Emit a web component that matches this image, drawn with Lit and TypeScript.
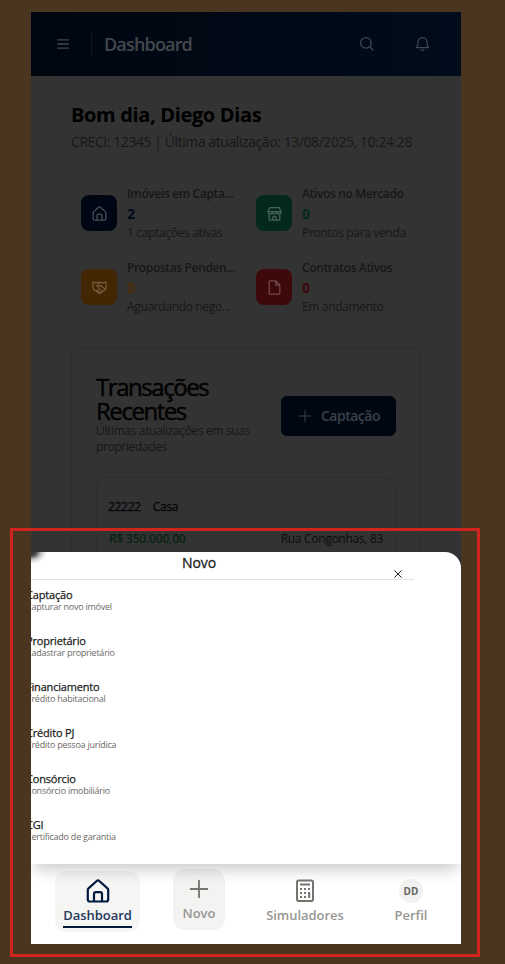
import { LitElement, html, css, svg } from "lit";
import { customElement, property } from "lit/decorators.js";

const ICONS: Record<string, unknown> = {
  menu: svg`<path d="M3 5h18M3 12h18M3 19h18"/>`,
  search: svg`<circle cx="11" cy="11" r="8.5"/><path d="M17.2 17.2 22.5 22.5"/>`,
  bell: svg`<path d="M2.5 18.5C4.2 16.6 4.8 13.8 4.8 9.6a7.2 7.2 0 0 1 14.4 0c0 4.2.6 7 2.3 8.9zM9.5 22.5h5"/>`,
  house: svg`<path d="M1.8 10.9a2 2 0 0 1 .7-1.5l8.2-7.4a2 2 0 0 1 2.6 0l8.2 7.4a2 2 0 0 1 .7 1.5V20.5a2 2 0 0 1-2 2H3.8a2 2 0 0 1-2-2zM8 22.5v-7.4a2 2 0 0 1 2-2h4a2 2 0 0 1 2 2V22.5"/>`,
  store: svg`<path d="M4.5 2.5h15l3 6.5H1.5zM1.5 9a3.5 3.5 0 0 0 7 0 3.5 3.5 0 0 0 7 0 3.5 3.5 0 0 0 7 0M3.5 12.5v10h17v-10M9.5 22.5v-5a1 1 0 0 1 1-1h3a1 1 0 0 1 1 1v5"/>`,
  handshake: svg`<path d="M1.5 3.5 6 4.5l6-1 6 1 4.500-1v10.500L12.500 22 3 15.500 1.500 12zM12.500 5 7.500 9.500c1.500 2 4 1.500 5.500 0l1.500-.5 6 5.500M11 13.500l4.500 4M8 16l4 4"/>`,
  file: svg`<path d="M5.500 1.500H14L20.500 8v13a1.500 1.500 0 0 1-1.500 1.500H5A1.500 1.500 0 0 1 3.500 21V3A1.500 1.500 0 0 1 5.500 1.500zM14 1.500V8h6.500"/>`,
  plus: svg`<path d="M12 2v20M2 12h20"/>`,
  close: svg`<path d="M4 4 20 20M20 4 4 20"/>`,
  calculator: svg`<rect x="4" y="1.5" width="16" height="20.5" rx="1.8"/><path stroke-linecap="butt" d="M7 5.500h10M7 10h2M11 10h2M15 10h2M7 14h2M11 14h2M15 14h2M7 18h2M11 18h2M16.200 13.500v5.500"/>`,
};

@customElement("ui-icon")
export class UiIcon extends LitElement {
  @property() name = "";
  @property({ type: Number }) size = 16;
  @property({ type: Number }) weight = 2;
  static styles = css`
    :host { display: inline-flex; flex: none; }
    svg { display: block; fill: none; stroke: currentColor; stroke-linecap: round; stroke-linejoin: round; }
  `;
  render() {
    return html`<svg width=${this.size} height=${this.size} viewBox="0 0 24 24" stroke-width=${this.weight}>${ICONS[this.name]}</svg>`;
  }
}

const STATS = [
  { tone: "navy", icon: "house", label: "Imóveis em Capta...", value: "2", note: "1 captações ativas" },
  { tone: "green", icon: "store", label: "Ativos no Mercado", value: "0", note: "Prontos para venda" },
  { tone: "amber", icon: "handshake", label: "Propostas Penden...", value: "0", note: "Aguardando nego..." },
  { tone: "red", icon: "file", label: "Contratos Ativos", value: "0", note: "Em andamento" },
];

const ACTIONS = [
  ["Captação", "Capturar novo imóvel"],
  ["Proprietário", "Cadastrar proprietário"],
  ["Financiamento", "Crédito habitacional"],
  ["Crédito PJ", "Crédito pessoa jurídica"],
  ["Consórcio", "Consórcio imobiliário"],
  ["CGI", "Certificado de garantia"],
];

@customElement("app-root")
export class AppRoot extends LitElement {
  static styles = css`
    :host {
      display: block; position: relative; box-sizing: border-box; width: 505px; height: 964px;
      padding: 12px 44px 20px 31px; background: #4a3520; overflow: hidden;
      font-family: "Open Sans", "Noto Sans", sans-serif; white-space: nowrap;
    }
    * { box-sizing: border-box; }
    .phone { position: relative; display: flex; flex-direction: column; width: 430px; height: 932px; background: #333; overflow: hidden; }
    .topbar { flex: none; height: 64px; display: flex; align-items: center; padding: 0 31px 1px 25px; background: linear-gradient(90deg, #000610, #000c1b); color: #44484d; }
    .divider { width: 1px; height: 24px; margin: 0 12px 0 21px; background: #11161f; }
    .heading { flex: 1; font-size: 18px; font-weight: 600; letter-spacing: -0.83px; padding-top: 1px; }
    .tools { display: flex; gap: 41px; }
    main { flex: 1; min-height: 0; overflow: hidden; padding: 25px 40px 0; }
    h1 { margin: 0; font-size: 20px; line-height: 28px; font-weight: 700; letter-spacing: -0.35px; color: #000; }
    .meta { margin-top: 3px; font-size: 14px; line-height: 20px; letter-spacing: -0.43px; color: #181716; }
    .stats { display: grid; grid-template-columns: 175px 175px; grid-auto-rows: 74px; margin-top: 24px; }
    .stat { display: flex; align-items: center; gap: 10px; padding-left: 10px; }
    .tile { width: 36px; height: 36px; border-radius: 8px; display: flex; align-items: center; justify-content: center; }
    .copy { display: flex; flex-direction: column; font-size: 12px; line-height: 20px; color: #181716; }
    .label { font-weight: 600; letter-spacing: -0.36px; }
    .value { font-size: 14px; line-height: 19px; font-weight: 700; }
    .note { letter-spacing: -0.34px; }
    .navy .tile { background: #000613; color: #4b5058; }
    .green .tile { background: #03291c; color: #496257; }
    .amber .tile { background: #442602; color: #765a3a; }
    .red .tile { background: #3e090a; color: #714b4c; }
    .navy .value { color: #000817; }
    .green .value { color: #04291c; }
    .amber .value { color: #4f2c08; }
    .red .value { color: #3e0a0b; }
    .card { height: 560px; margin-top: 23px; padding: 27px 24px 0; border: 1px solid #2d2d2d; border-radius: 10px; }
    .cardhead { display: flex; justify-content: space-between; align-items: center; }
    h2 { margin: 0; font-size: 24px; line-height: 24px; font-weight: 500; letter-spacing: -1.45px; color: #020202; -webkit-text-stroke: 0.5px #020202; }
    .sub { font-size: 12px; line-height: 16px; letter-spacing: -0.36px; color: #181716; }
    .button { width: 115px; height: 40px; margin-top: 1px; padding-left: 17px; display: flex; align-items: center; gap: 9px; border-radius: 6px; background: #000612; color: #3d4147; font-size: 14px; font-weight: 600; letter-spacing: -0.5px; }
    .deal { height: 300px; margin-top: 22px; padding: 19px 12px 0 11px; border: 1px solid #2d2d2d; border-radius: 10px; font-size: 12px; line-height: 20px; letter-spacing: -0.3px; }
    .dealid { display: flex; gap: 12px; color: #05070b; -webkit-text-stroke: 0.3px #05070b; }
    .dealrow { display: flex; justify-content: space-between; margin-top: 12px; padding-left: 1px; color: #0b0b0b; }
    .price { color: #062313; font-weight: 600; letter-spacing: -0.2px; }
    nav { flex: none; height: 80px; background: #fff; display: flex; align-items: flex-start; padding: 7px 24px 0; font-size: 13px; font-weight: 600; line-height: 18px; }
    .tab { display: flex; flex-direction: column; align-items: center; height: 61px; padding-top: 8px; border-radius: 12px; color: #77736f; }
    .tab span { margin-top: 3px; color: #979694; letter-spacing: -0.03px; }
    .home { width: 85px; background: #f5f5f4; color: #001a3e; }
    .home span { margin-top: 2px; color: #24375a; border-bottom: 2px solid #001a3e; line-height: 20px; padding-bottom: 1px; letter-spacing: -0.03px; }
    .new { width: 52px; margin: -2px 0 0 33px; background: #f3f3f2; }
    .new ui-icon { margin: 2px 0; }
    .sims { width: 84px; margin-left: 38px; }
    .sims ui-icon { margin-right: 1px; }
    .profile { width: 46px; margin-left: 41px; }
    .avatar { width: 24px; height: 24px; border-radius: 50%; background: #f2f2f1; color: #666360; font-size: 10px; font-weight: 700; line-height: 24px; text-align: center; }
    .sheet { position: absolute; left: 0; right: 0; bottom: 80px; height: 312px; background: radial-gradient(ellipse 16px 12px at 0 0, #303030 0, #444 30%, rgba(150,150,150,.5) 65%, rgba(255,255,255,0) 100%) #fff; border-top-right-radius: 16px; box-shadow: 0 10px 15px -4px rgba(0,0,0,.2); color: #1f1f1f; }
    .sheethead { display: flex; height: 28px; width: 383px; border-bottom: 1px solid #e2e2e2; }
    .sheettitle { width: 336px; text-align: center; font-size: 14px; line-height: 22px; letter-spacing: -0.1px; -webkit-text-stroke: 0.3px #1f1f1f; }
    .sheethead ui-icon { margin: 17px 0 0 26px; }
    .actions { overflow: hidden; height: 284px; }
    .action { height: 46px; margin-left: -5px; padding-top: 8px; }
    .name { font-size: 11px; line-height: 14px; letter-spacing: -0.18px; color: #1c1c1c; -webkit-text-stroke: 0.25px #1c1c1c; }
    .hint { font-size: 9px; line-height: 10px; letter-spacing: -0.24px; color: #6c6966; }
    .marker { position: absolute; left: 10px; top: 528px; width: 470px; height: 429px; border: 3px solid #d1241e; }
  `;
  render() {
    return html`
      <div class="phone">
        <header class="topbar">
          <ui-icon name="menu" size="14" weight="2.4"></ui-icon>
          <div class="divider"></div>
          <div class="heading">Dashboard</div>
          <div class="tools">
            <ui-icon name="search" size="15"></ui-icon>
            <ui-icon name="bell" size="15"></ui-icon>
          </div>
        </header>
        <main>
          <h1>Bom dia, Diego Dias</h1>
          <div class="meta">CRECI: 12345 | Última atualização: 13/08/2025, 10:24:28</div>
          <section class="stats">
            ${STATS.map((s) => html`
              <div class="stat ${s.tone}">
                <div class="tile"><ui-icon name=${s.icon} size="15"></ui-icon></div>
                <div class="copy"><span class="label">${s.label}</span><span class="value">${s.value}</span><span class="note">${s.note}</span></div>
              </div>`)}
          </section>
          <section class="card">
            <div class="cardhead">
              <div><h2>Transações<br />Recentes</h2><div class="sub">Últimas atualizações em suas<br />propriedades</div></div>
              <div class="button"><ui-icon name="plus" size="14" weight="1.8"></ui-icon>Captação</div>
            </div>
            <div class="deal">
              <div class="dealid"><span>22222</span><span>Casa</span></div>
              <div class="dealrow"><span class="price">R$ 350.000,00</span><span>Rua Congonhas, 83</span></div>
            </div>
          </section>
        </main>
        <nav>
          <div class="tab home"><ui-icon name="house" size="24" weight="2.2"></ui-icon><span>Dashboard</span></div>
          <div class="tab new"><ui-icon name="plus" size="20" weight="2.2"></ui-icon><span>Novo</span></div>
          <div class="tab sims"><ui-icon name="calculator" size="24" weight="2"></ui-icon><span>Simuladores</span></div>
          <div class="tab profile"><div class="avatar">DD</div><span>Perfil</span></div>
        </nav>
        <section class="sheet">
          <div class="sheethead"><div class="sheettitle">Novo</div><ui-icon name="close" size="10" weight="2.4"></ui-icon></div>
          <div class="actions">
            ${ACTIONS.map(([name, hint]) => html`<div class="action"><div class="name">${name}</div><div class="hint">${hint}</div></div>`)}
          </div>
        </section>
      </div>
      <div class="marker"></div>
    `;
  }
}
